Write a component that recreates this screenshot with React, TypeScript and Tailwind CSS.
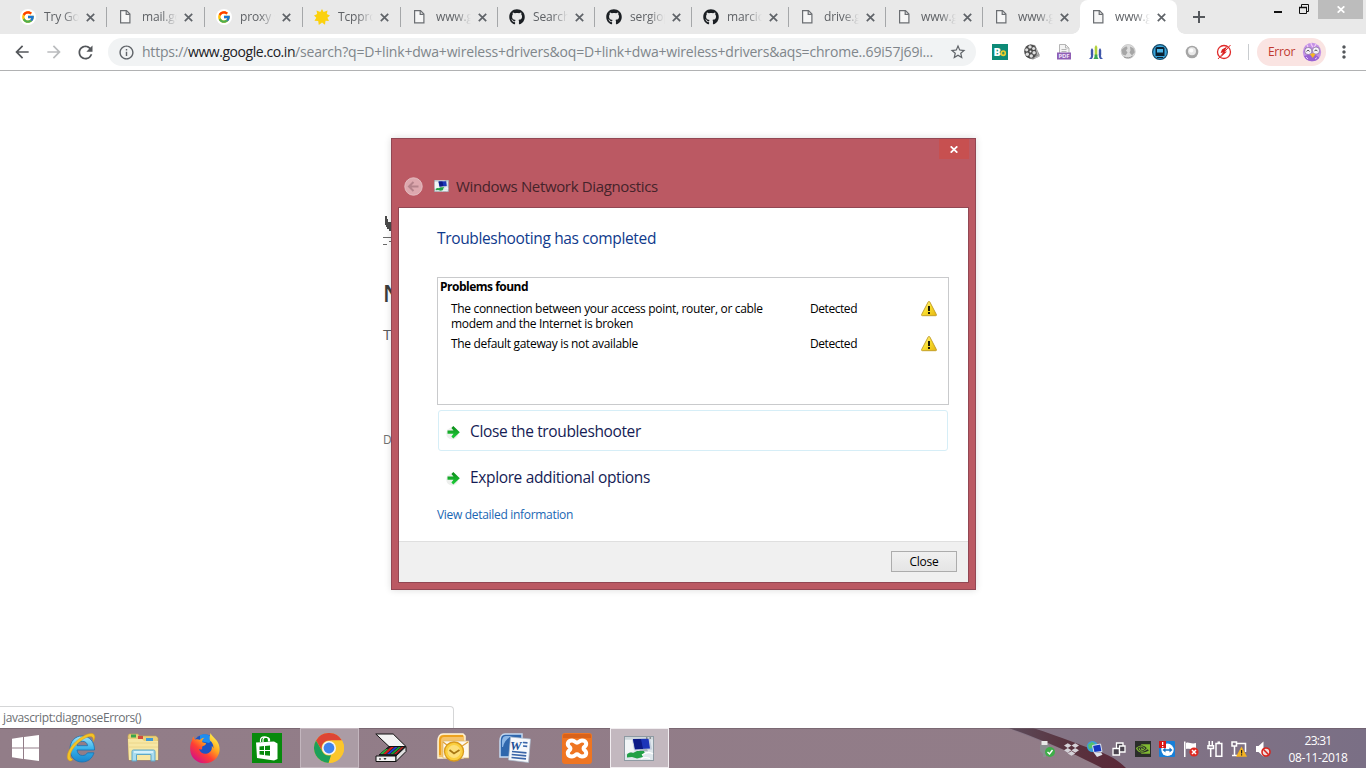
import type { ReactNode } from "react";
import { FcGoogle } from "react-icons/fc";
import { FaDropbox, FaGithub } from "react-icons/fa6";
import { MdArrowBack, MdArrowForward, MdRefresh, MdInfoOutline, MdStarBorder, MdMoreVert } from "react-icons/md";
import { SiNvidia } from "react-icons/si";

/* ---------- tab strip ---------- */

type Fav = "google" | "page" | "sun" | "github";

const tabs: { title: string; fav: Fav; width: string }[] = [
  { title: "Try Goog", fav: "google", width: "w-[98px]" },
  { title: "mail.goo", fav: "page", width: "w-[98px]" },
  { title: "proxy s", fav: "google", width: "w-[98px]" },
  { title: "Tcpprox", fav: "sun", width: "w-[98px]" },
  { title: "www.go", fav: "page", width: "w-[97px]" },
  { title: "Search", fav: "github", width: "w-[97px]" },
  { title: "sergiop", fav: "github", width: "w-[97px]" },
  { title: "marcica", fav: "github", width: "w-[97px]" },
  { title: "drive.go", fav: "page", width: "w-[97px]" },
  { title: "www.go", fav: "page", width: "w-[97px]" },
  { title: "www.go", fav: "page", width: "w-[97px]" },
  { title: "www.go", fav: "page", width: "w-[97px]" },
];

function Favicon({ kind }: { kind: Fav }) {
  if (kind === "google")
    return (
      <span className="flex h-4 w-4 items-center justify-center rounded-full bg-white">
        <FcGoogle size={14} />
      </span>
    );
  if (kind === "github") return <FaGithub size={16} color="#1b1f23" />;
  if (kind === "sun")
    return (
      <svg width="16" height="16" viewBox="0 0 16 16">
        <path
          d="M8 0l1.600 3L13.500 1.500l-.7 3.600 3.200 1.300-2.600 2.300 1.600 3.300-3.500-.2L11 15.800 8 13.500 4.800 16l-.6-4-3.700-.2 1.800-3L0 6.500l3.200-1.400-.7-3.700L6.300 3z"
          fill="#fbd10e"
        />
      </svg>
    );
  return (
    <svg width="16" height="16" viewBox="0 0 16 16" fill="none" stroke="#6b6e72" strokeWidth="1.200">
      <path d="M2.600 1.600h5.900l3.400 3.400v8.900H2.600z" fill="#f6f6f6" />
      <path d="M8.200 1.800v3.600h3.600" />
    </svg>
  );
}

function CrossIcon() {
  return (
    <svg width="9" height="9" viewBox="0 0 9 9" stroke="#5f6368" strokeWidth="1.700">
      <path d="M.8.8l7.400 7.400M8.200.8L.8 8.200" />
    </svg>
  );
}

function TabStrip() {
  return (
    <div className="flex h-[34px] shrink-0 bg-[#e9e9e9] pl-[9px]">
      {tabs.map((t, i) => {
        const active = i === tabs.length - 1;
        const separated = i < tabs.length - 2;
        return (
          <div
            key={i}
            className={`${t.width} relative flex h-full shrink-0 items-center pl-[11px] ${active ? "rounded-t-lg bg-white" : ""}`}
          >
            <Favicon kind={t.fav} />
            <span className="ml-2 w-[35px] overflow-hidden text-[12px] leading-4 tracking-[-0.15px] whitespace-nowrap text-[#5f6266] [mask-image:linear-gradient(to_right,black_55%,transparent_100%)]">
              {t.title}
            </span>
            <span className="ml-[7px]">
              <CrossIcon />
            </span>
            {separated && <i className="ml-auto h-5 w-px bg-[#a5a7a9]" />}
            {active && (
              <>
                <i className="absolute bottom-0 -left-2 h-2 w-2 bg-[radial-gradient(circle_at_0_0,#e9e9e9_7.5px,#fff_8px)]" />
                <i className="absolute -right-2 bottom-0 h-2 w-2 bg-[radial-gradient(circle_at_100%_0,#e9e9e9_7.5px,#fff_8px)]" />
              </>
            )}
          </div>
        );
      })}
      <div className="flex w-11 items-center justify-center">
        <svg width="12" height="12" viewBox="0 0 12 12" stroke="#55585c" strokeWidth="2">
          <path d="M6 0v12M0 6h12" />
        </svg>
      </div>
      <div className="ml-auto flex h-5 items-start">
        <svg className="mt-[11px]" width="8" height="2">
          <rect width="8" height="2" fill="#111" />
        </svg>
        <svg className="mt-1 ml-[17px]" width="10" height="10" viewBox="0 0 10 10" fill="none" stroke="#111">
          <path d="M.5 3.500h7v6h-7zM2.500 3V.5h7v7H8" />
          <path d="M0 3.500h8" strokeWidth="1.500" />
        </svg>
        <div className="mr-[3px] ml-[9px] flex h-[19px] w-[45px] items-center justify-center bg-[#bcbcbc]">
          <svg width="8" height="7" viewBox="0 0 8 7" stroke="#fff" strokeWidth="1.700">
            <path d="M.7.3l6.600 6.400M7.300.3L.7 6.700" />
          </svg>
        </div>
      </div>
    </div>
  );
}

/* ---------- toolbar ---------- */

const extensionIcons: ReactNode[] = [
  <svg key="bo" width="16" height="16">
    <rect width="16" height="16" fill="#0d8a76" />
    <text x="1.500" y="12" fontSize="11" fontWeight="800" fill="#fff" fontFamily="Open Sans, sans-serif">
      B
    </text>
    <ellipse cx="11.300" cy="9.200" rx="2" ry="2.200" fill="#3c9a55" stroke="#f0cf2c" strokeWidth="1.600" />
  </svg>,
  <svg key="reel" width="16" height="16" viewBox="0 0 16 16">
    <path d="M6 .5l5 .5 4.500 9.500v2L9 15.500l-4-1z" fill="#8b8b8b" />
    <ellipse cx="6.500" cy="7.500" rx="6.300" ry="7" fill="#4c4c4c" />
    <g fill="#dedede">
      <circle cx="6" cy="2.900" r="1.700" />
      <circle cx="2.700" cy="5.800" r="1.600" />
      <circle cx="3.300" cy="10.300" r="1.700" />
      <circle cx="7.300" cy="12" r="1.700" />
      <circle cx="10.100" cy="8.700" r="1.700" />
      <circle cx="9.600" cy="4.600" r="1.500" />
    </g>
    <circle cx="6.500" cy="7.500" r="1" fill="#eee" />
    <path d="M12 4.500l2.200 7M10.500 14l4.500-2" stroke="#ccc" strokeWidth=".8" />
  </svg>,
  <svg key="pdf" width="16" height="16" viewBox="0 0 16 16">
    <path d="M3.500.5h6l3.500 3.500v6H3.500z" fill="#f4f4f4" stroke="#b5b5b5" />
    <path d="M9.500.5v3.500H13M5.500 5.500h5M5.500 7.500h5" stroke="#b5b5b5" fill="none" />
    <rect x="1" y="8.500" width="14" height="7" fill="#8f5fb4" />
    <text x="2.500" y="14.300" fontSize="6" fontWeight="700" fill="#f1e6fa" fontFamily="Open Sans, sans-serif" textLength="11">
      PDF
    </text>
  </svg>,
  <svg key="bars" width="16" height="16" viewBox="0 0 16 16">
    <path d="M6.700 12V3L8 1l1.300 2v9z" fill="#b2d23c" />
    <path d="M2.800 11V6l1.200-2 1.200 2v5zM10.800 11V6L12 4l1.200 2v5z" fill="#3f55a8" />
    <path d="M.8 15c1.700-.8 2.200-2 2.200-4.500h2.200c0 2.300-.3 3.600-1.400 4.500zM15.200 15c-1.700-.8-2.200-2-2.200-4.500h-2.200c0 2.300.3 3.600 1.400 4.500z" fill="#4059ad" />
    <path d="M5.300 15c1-1 1.400-2.300 1.400-4.500h2.600c0 2.200.4 3.500 1.400 4.500z" fill="#3aa655" />
  </svg>,
  <svg key="globe" width="16" height="16" viewBox="0 0 16 16">
    <circle cx="8.200" cy="7.500" r="7" fill="#dcdcdc" stroke="#bdbdbd" strokeWidth=".7" />
    <path d="M1.500 6c1.500-1.500 3-3.500 5.500-3.500l.5 2L6 6.500l1.500 2-2 3-3-1zM10 2.500l3.500 1.800 1.300 4-2.800 3.200-2.500-3 1-2z" fill="#a6a6a6" />
    <path d="M4 13c3 1.300 6.500 1 8.500-1" stroke="#999" fill="none" />
  </svg>,
  <svg key="train" width="16" height="16" viewBox="0 0 16 16">
    <circle cx="8" cy="8" r="7.400" fill="#3aa7de" stroke="#174c6b" strokeWidth="1.200" />
    <path d="M3.500 4.500c0-1 1-1.500 2-1.500h5c1 0 2 .5 2 1.500V12h-9z" fill="#0b2233" />
    <rect x="5" y="5" width="6" height="3.500" fill="#4fb7e8" />
    <path d="M5 10.500h1.500M9.500 10.500H11M5 13.500h6" stroke="#0b2233" />
  </svg>,
  <svg key="ring" width="16" height="16" viewBox="0 0 16 16">
    <circle cx="8" cy="8" r="6.300" fill="#a5a5a5" />
    <circle cx="8" cy="7.300" r="4" fill="#e9e9e9" />
    <circle cx="7.300" cy="6.500" r="2" fill="#fff" />
  </svg>,
  <svg key="flash" width="16" height="16" viewBox="0 0 16 16">
    <circle cx="8" cy="8" r="6.500" fill="none" stroke="#e02b2b" strokeWidth="1.300" />
    <path d="M11 2.500L6 5.500 4.600 9l2.600-.5L4.500 13.500l6.500-6-2.500.2z" fill="#d81f1f" />
    <path d="M2 15L14.500 1" stroke="#e02b2b" />
  </svg>,
];

function Avatar() {
  return (
    <svg width="20" height="20" viewBox="0 0 20 20">
      <circle cx="10" cy="10" r="9.200" fill="#c391e6" />
      <path d="M2 14c1 3 4 5.300 8 5.200 3 0 5.500-1 7.500-3.500l-4-3-8 .3z" fill="#9a63d3" />
      <path d="M5 3c1 1 1 2 .5 3M9 1c0 2 1 3 2 4M14 2l-2 4" stroke="#f4c9f6" strokeWidth="1.300" fill="none" />
      <circle cx="6.300" cy="9" r="3.600" fill="#f6f1fb" stroke="#55406d" strokeWidth=".5" />
      <circle cx="14" cy="8.600" r="3.600" fill="#f6f1fb" stroke="#55406d" strokeWidth=".5" />
      <path d="M4.600 9.500c.6-1.500 2.400-1.500 3 0M12.400 9.200c.6-1.500 2.400-1.500 3 0" stroke="#333" fill="none" strokeWidth=".9" />
      <path d="M8 12.200l3-1.200 2.300 1.500-2.600 3.500z" fill="#f5b820" />
      <path d="M4 15l2 2M13 17l2-1.500" stroke="#e5c8fa" />
    </svg>
  );
}

function Toolbar() {
  return (
    <div className="flex h-[37px] shrink-0 items-center border-b border-[#b1b2b3] bg-white">
      <div className="flex w-[108px] items-center pl-3">
        <MdArrowBack size={20} color="#54575b" />
        <MdArrowForward size={20} color="#babcbe" className="ml-3" />
        <MdRefresh size={21} color="#54575b" className="ml-[11px]" />
      </div>
      <div className="flex h-7 w-[868px] items-center rounded-full bg-[#f1f3f4] pr-[9px] pl-[10px]">
        <MdInfoOutline size={17} color="#5f6368" />
        <p className="ml-[7px] text-[14px] leading-5 whitespace-nowrap text-[#80868b]">
          <span className="tracking-[-0.22px]">https://</span>
          <span className="tracking-[-0.45px] text-[#202124]">www.google.co.in</span>
          <span className="tracking-[-0.184px]">
            /search?q=D+link+dwa+wireless+drivers&amp;oq=D+link+dwa+wireless+drivers&amp;aqs=chrome..69i57j69i...
          </span>
        </p>
        <MdStarBorder size={18} color="#5f6368" className="ml-auto" />
      </div>
      <div className="ml-4 flex gap-4">{extensionIcons}</div>
      <i className="ml-4 h-4 w-px bg-[#c9cccf]" />
      <div className="ml-2 flex h-7 w-[69px] items-center rounded-full bg-[#fae4e2] pl-[11px]">
        <span className="w-[34px] text-[12px] leading-4 tracking-[-0.3px] text-[#c0392f]">Error</span>
        <Avatar />
      </div>
      <MdMoreVert size={20} color="#54575b" className="ml-2" />
    </div>
  );
}

/* ---------- page behind the dialog ---------- */

function ErrorPage() {
  return (
    <main className="flex flex-1 flex-col overflow-hidden bg-white">
      <div className="ml-[383px] flex w-[9px] flex-col pt-[145px] text-[#3c3c3c]">
        <svg width="9" height="32" viewBox="0 0 9 32" shapeRendering="crispEdges">
          <path d="M2 0h2v3h1v3h4v9H6v-2H4v-2H3v-2H2z" fill="#4b4b4b" />
          <path d="M0 21h9v1H0zM6 25h3v1H6zM0 28h4v1H0z" fill="#6a6a6a" />
        </svg>
        <span className="mt-[29px] text-[23px] leading-[32px] font-semibold">N</span>
        <span className="mt-[15px] text-[15px] leading-5 text-[#5b5b5b]">T</span>
        <span className="mt-[86px] text-[12px] leading-5 text-[#707070]">D</span>
      </div>
      <div className="mt-auto flex h-[22px] w-[454px] items-center rounded-tr border-t border-r border-[#d5d6d7] bg-white pt-px pl-[3px] text-[12px] tracking-[-0.38px] text-[#6c6f73]">
        javascript:diagnoseErrors()
      </div>
    </main>
  );
}

/* ---------- diagnostics dialog ---------- */

function DiagnosticsIcon({ width, height }: { width: number; height: number }) {
  return (
    <svg width={width} height={height} viewBox="0 0 30 25">
      <rect x=".5" y=".5" width="29" height="24" fill="#dfe7ec" stroke="#8e9aa3" />
      <rect x="1" y="1" width="28" height="2.500" fill="#cfd7db" />
      <path d="M1 4h8l2 11-10 3z" fill="#f2f5f7" />
      <path d="M8 3l18-.5 2 11-18 1z" fill="#c3cddc" />
      <path d="M9 3l15.500-.2 1.500 9.700-15 .8z" fill="#1c35b8" />
      <path d="M9 3l8-.1 2 10-8 .4z" fill="#0c1a86" />
      <path d="M22 2h1.500M25.500 2H27" stroke="#444" />
      <path d="M15 13.500l8-.4 1 2.200h-8z" fill="#a7b2bc" />
      <path d="M3 18.500c2-2 4-2.500 6-1.500l4-2h7l1 2.500-3 1.500 1 2-6 1.500-5-1.500-5 .5z" fill="#22a046" />
      <path d="M18 19c4-3 8-3 11-1M17 23c3-2 6-1.500 9-.5" stroke="#fff" fill="none" strokeWidth="1.300" />
    </svg>
  );
}

function WarningIcon() {
  return (
    <svg width="16" height="16" viewBox="0 0 16 16">
      <defs>
        <linearGradient id="warn" x1="0" x2="1" y1="0" y2="1">
          <stop offset="0" stopColor="#fff59a" />
          <stop offset=".5" stopColor="#f8dc2c" />
          <stop offset="1" stopColor="#e5b512" />
        </linearGradient>
      </defs>
      <path d="M7.200.9c.4-.7 1.200-.7 1.600 0l6.600 12.700c.3.600 0 1.100-.7 1.100H1.300c-.7 0-1-.5-.7-1.100z" fill="url(#warn)" stroke="#c09a22" strokeWidth=".9" />
      <path d="M7 5h2v5H7zM7 11h2v2H7z" fill="#1c1a05" />
    </svg>
  );
}

function GreenArrow() {
  return (
    <svg width="16" height="16" viewBox="0 0 16 16">
      <defs>
        <linearGradient id="arrow" x1="0" x2="0" y1="0" y2="1">
          <stop offset="0" stopColor="#0b8a18" />
          <stop offset="1" stopColor="#1fd03a" />
        </linearGradient>
      </defs>
      <circle cx="6.200" cy="9.500" r="6" fill="#e6e8e6" opacity=".7" />
      <path d="M1.500 6.600H7.500L5.400 4 7.300 2 13.800 8.200 7.300 14.400 5.400 12.400 7.500 9.800H1.500z" fill="url(#arrow)" />
    </svg>
  );
}

const problems = [
  "The connection between your access point, router, or cable modem and the Internet is broken",
  "The default gateway is not available",
];

function Dialog() {
  return (
    <section className="absolute top-[138px] left-[391px] flex h-[452px] w-[585px] flex-col border border-[#924753] bg-[#bb5963] px-[6px] pb-[6px] shadow-[0_0_7px_rgba(0,0,0,0.14)]">
      <div className="flex h-5 shrink-0 justify-end">
        <button className="flex h-5 w-[30px] items-center justify-center bg-[#c75050]">
          <svg width="8" height="7" viewBox="0 0 8 7" stroke="#fff" strokeWidth="1.700">
            <path d="M.7.3l6.600 6.400M7.300.3L.7 6.700" />
          </svg>
        </button>
      </div>
      <header className="flex h-12 shrink-0 items-center pt-[7px] pl-[6px]">
        <svg width="19" height="19" viewBox="0 0 19 19">
          <circle cx="9.500" cy="9.500" r="8.700" fill="#dda8ae" stroke="#e4bcc0" />
          <path d="M14.500 9.500H5.500M9.500 5l-4.500 4.500L9.500 14" stroke="#b5838b" strokeWidth="2" fill="none" />
        </svg>
        <span className="-mt-[2px] ml-[11px]">
          <DiagnosticsIcon width={15} height={12} />
        </span>
        <h2 className="-mt-[2px] ml-[7px] text-[15px] leading-5 tracking-[-0.35px] text-[#45232a]">
          Windows Network Diagnostics
        </h2>
      </header>
      <div className="flex flex-1 flex-col border border-[#924753] bg-white">
        <div className="flex flex-col items-start pt-[18px] pl-[38px]">
          <h1 className="text-[15.5px] leading-6 tracking-[-0.35px] text-[#0f3a8c]">Troubleshooting has completed</h1>
          <div className="mt-[27px] h-32 w-[512px] border border-[#c9cacc] text-[12px] text-black">
            <h3 className="pt-px pl-[2px] leading-4 font-bold tracking-[-0.5px]">Problems found</h3>
            <ul className="mt-[6px] flex flex-col gap-[5px] pl-[13px]">
              {problems.map((p) => (
                <li key={p} className="grid grid-cols-[359px_111px_16px] leading-[15px]">
                  <span className="w-[325px] tracking-[-0.325px]">{p}</span>
                  <span className="tracking-[-0.44px]">Detected</span>
                  <span className="h-[15px]">
                    <WarningIcon />
                  </span>
                </li>
              ))}
            </ul>
          </div>
          <button className="mt-[5px] ml-px flex h-[41px] w-[510px] items-center rounded-[3px] border border-[#d6eef7] pt-[2px] pl-[7px] text-[15.5px] tracking-[-0.37px] text-[#151c55]">
            <GreenArrow />
            <span className="ml-2">Close the troubleshooter</span>
          </button>
          <button className="mt-[6px] ml-px flex h-[41px] w-[510px] items-center pl-2 text-[15.5px] tracking-[-0.36px] text-[#151c55]">
            <GreenArrow />
            <span className="ml-2">Explore additional options</span>
          </button>
          <a className="mt-[9px] text-[12px] leading-4 tracking-[-0.31px] text-[#1a66b3]">View detailed information</a>
        </div>
        <footer className="mt-auto flex h-[41px] items-center justify-end border-t border-[#dfdfdf] bg-[#f0f0f0] pr-[11px] pb-px">
          <button className="flex h-[21px] w-[66px] items-center justify-center border border-[#acacac] bg-linear-to-b from-[#f0f0f0] to-[#e5e5e5] pt-px text-[12px] leading-4 tracking-[-0.25px] text-black">
            Close
          </button>
        </footer>
      </div>
    </section>
  );
}

/* ---------- taskbar ---------- */

const StartIcon = (
  <svg width="27" height="26" viewBox="0 0 27 26" fill="#fff">
    <path d="M0 3.700L11 2v10.500H0zM12 1.900L27 0v12.500H12zM0 13.500h11V24L0 22.300zM12 13.500h15V26l-15-2z" />
  </svg>
);

const IeIcon = (
  <svg width="30" height="32" viewBox="0 0 30 32">
    <defs>
      <linearGradient id="ie" x1="0" x2="0" y1="0" y2="1">
        <stop offset="0" stopColor="#9fe4fb" />
        <stop offset=".5" stopColor="#35b1ea" />
        <stop offset="1" stopColor="#1a86cd" />
      </linearGradient>
    </defs>
    <path
      d="M16 4c7.500 0 12.500 5.500 12.500 14H11c.3 3.500 2.500 5.500 5.500 5.500 2.200 0 3.900-.9 5-2.700h6.500C26.300 26.500 22 30 16 30 8.800 30 4 24.500 4 17S9 4 16 4zm-5 9.700h10.600C21.300 11 19.300 9.300 16.300 9.300S11.400 11 11 13.700z"
      fill="url(#ie)"
      stroke="#1874b4"
      strokeWidth=".8"
      fillRule="evenodd"
    />
    <path d="M5 29C-1 29 .5 20 7 12.500 14 4.500 25-1 28 2.500c1.500 2 .7 4.500-.7 7 .3-3-.3-5-2.800-5C20.500 4.500 13 9 8 15.500 3.500 21.500 3 26 7 27.500z" fill="#f4c326" stroke="#d79b12" strokeWidth=".5" />
  </svg>
);

const ExplorerIcon = (
  <svg width="32" height="30" viewBox="0 0 32 30">
    <path d="M1 3l1-2h9l1 2h17l2 2v22H2z" fill="#e9cf79" stroke="#c8a94f" strokeWidth=".6" />
    <path d="M4 1.500h5v3H4z" fill="#3aa54b" />
    <path d="M11 3h5v3h-5z" fill="#d24a3c" />
    <path d="M19 5h7v3h-7z" fill="#3f9ad6" />
    <path d="M1 6h14l2 2h14v19H2z" fill="#f7e7a4" />
    <path d="M1.500 10h29M2 14h29" stroke="#ecd68a" />
    <path d="M5 28V18.500c0-1 .6-1.500 1.500-1.500h20c1 0 1.500.5 1.500 1.500V28h-4v-6.500H9.500V28z" fill="#a9dcef" stroke="#5fa7c6" />
    <path d="M7 19h19" stroke="#e6f8ff" strokeWidth="1.500" />
  </svg>
);

const FirefoxIcon = (
  <svg width="32" height="32" viewBox="0 0 32 32">
    <defs>
      <linearGradient id="fx" x1=".85" x2=".2" y1=".1" y2=".9">
        <stop offset="0" stopColor="#fff04a" />
        <stop offset=".35" stopColor="#ffa51f" />
        <stop offset=".65" stopColor="#ff3f33" />
        <stop offset="1" stopColor="#d8147f" />
      </linearGradient>
    </defs>
    <circle cx="16" cy="15" r="12.500" fill="#1c54c4" />
    <path d="M11 3c5-2 11 0 13 4l-4 4-9-2z" fill="#1f8df0" />
    <path
      d="M21.500 1c1 3 4 4.500 6.500 8 4 6 3 12.500-.5 17C21 33.500 9 33 3.500 25 .3 20 .6 13 3 8.500c.2-1.700.6-3 1.700-4 0 1.500.5 2.400 1.300 3 1.700-.5 3.300-.4 5 .3 1.300-1.300 2.700-2 4.300-2-2 1.700-2.300 3-2 4.500l3.800.9c-.2 1.700-1.600 2.300-3.800 3.300-.5 1 .4 2.700-.8 3-1.500 0-2.500-.5-2.500-.5 1 3.500 4 5.200 7.300 4.700 4-.6 6.200-4 5.400-7.700 1 .7 1.500 1.600 1.700 2.500.3-3-.8-6-3.400-8-1-3 .5-6 .5-7.500z"
      fill="url(#fx)"
    />
  </svg>
);

const StoreIcon = (
  <svg width="30" height="30" viewBox="0 0 30 30">
    <rect width="30" height="30" fill="#078a0c" />
    <path d="M4 9.500l18-1 3.500 2V26L22 27.500 5 25z" fill="#fff" />
    <path d="M8.500 9V7c0-4 8-4.500 8 0v1.500M11 9V6.500c.5-3 6-3 6.500 0v2" fill="none" stroke="#fff" strokeWidth="1.200" />
    <path d="M7.500 13.500l4.500-.4v4H7.500zM13 13l5-.5v4.600h-5zM7.500 18H12v4l-4.500-.5zM13 18h5v4.800l-5-.6z" fill="#078a0c" />
  </svg>
);

const ChromeIcon = (
  <svg width="30" height="30" viewBox="0 0 30 30">
    <circle cx="15" cy="15" r="15" fill="#fbc62c" />
    <path d="M2 7.500A15 15 0 0 1 28 7.500H15a7.500 7.500 0 0 0-6.500 11.200z" fill="#dd4535" />
    <path d="M2 7.500l6.500 11.200A7.500 7.500 0 0 0 17 22.200L14.500 30A15 15 0 0 1 2 7.500z" fill="#1ca05a" />
    <path d="M14.800 30l6.700-11.300A7.500 7.500 0 0 0 15 7.500h13A15 15 0 0 1 14.800 30z" fill="#fbc62c" />
    <circle cx="15" cy="15" r="7" fill="#f4f4f4" />
    <circle cx="15" cy="15" r="5.400" fill="#4083ee" />
  </svg>
);

const ScannerIcon = (
  <svg width="32" height="30" viewBox="0 0 32 30" stroke="#111" strokeLinejoin="round">
    <path d="M.8 1h17.400L31 13.500H14z" fill="#f3f3f3" />
    <path d="M4 22l10-8.500h17L21 22.500z" fill="#262626" />
    <path d="M8 21l8-7h3l-8 7z" fill="#d81d1d" stroke="none" />
    <path d="M12 21l8-7h2.500l-8 7z" fill="#1c3fe0" stroke="none" />
    <path d="M15.500 21l8-7H26l-8 7z" fill="#16a531" stroke="none" />
    <path d="M5 21l6-5h2l-5 5z" fill="#26b53d" stroke="none" />
    <path d="M19 21l8-7h1.500L21 21z" fill="#d81d1d" stroke="none" />
    <path d="M1 23h20v5.500H1z" fill="#f3f3f3" />
    <path d="M21 23l10-9.500v5L21 28.500z" fill="#e0e0e0" />
    <path d="M4 26h2M9 25l1 1.500L11 25" fill="none" />
  </svg>
);

const OutlookIcon = (
  <svg width="32" height="30" viewBox="0 0 32 30">
    <path d="M6 1h20l2 2v20l-2 2H1V8c0-4 2-7 5-7z" fill="#f5c36a" stroke="#fff3d5" strokeWidth="1.500" />
    <path d="M3 22V8c0-3 1-5 4-5h19" fill="none" stroke="#eda21e" strokeWidth="2" />
    <path d="M6 8h26v17H6z" fill="#fdf8ec" stroke="#d9b46a" strokeWidth=".7" />
    <path d="M6 9l12 9L31 9" fill="none" stroke="#e0a23a" strokeWidth="1.300" />
    <circle cx="17" cy="18.500" r="9.500" fill="#fbcf3e" stroke="#d99a1c" strokeWidth="1.300" />
    <circle cx="17" cy="18.500" r="6.500" fill="#fde07a" />
    <path d="M12.500 17l4.500 3.500 5.500-3.500" fill="none" stroke="#a77712" strokeWidth="1.700" />
  </svg>
);

const WordIcon = (
  <svg width="32" height="30" viewBox="0 0 32 30">
    <path d="M6 1h17v23H1V8c0-4 2-7 5-7z" fill="#2f67ad" stroke="#c5daf2" strokeWidth="1.500" />
    <path d="M4 14c1-5 4-9 9-11H7C4 3 3 6 3 9v5z" fill="#8cb7e6" />
    <path d="M11.500 4l20 2-2 23.500L9.500 27z" fill="#f7f9fc" stroke="#a9b9cc" strokeWidth=".7" />
    <path d="M24 9.500l4.500.4M24 13l4.200.4M13 18.500l14.500 1.400M12.700 21.500l14.500 1.400M12.500 24.500L27 25.900" stroke="#3b66a8" strokeWidth="1.700" />
    <text x="11" y="16.500" fontSize="13" fontWeight="700" fontStyle="italic" fill="#1e4f96" fontFamily="Liberation Serif, serif">
      W
    </text>
  </svg>
);

const XamppIcon = (
  <svg width="30" height="31" viewBox="0 0 30 31">
    <rect width="30" height="31" rx="3" fill="#ef7522" />
    <path d="M1 3c0-2 1-2 2-2h24c1 0 2 0 2 2v2H1z" fill="#d9621a" />
    <path
      d="M10 7.500c-4.500 0-5.500 4.200-2.300 6.500 1 .7 1 2.300 0 3-3.200 2.300-2.200 6.500 2.300 6.500 3 0 3-2.200 5-2.200s2 2.200 5 2.200c4.500 0 5.500-4.200 2.300-6.500-1-.7-1-2.300 0-3 3.200-2.300 2.200-6.500-2.300-6.500-3 0-3 2.200-5 2.200s-2-2.200-5-2.200z"
      fill="none"
      stroke="#fff"
      strokeWidth="4"
    />
    <path d="M11.500 12l7 7M18.500 12l-7 7" stroke="#ef7522" strokeWidth="2.500" strokeLinecap="round" />
  </svg>
);

const taskbarApps: { name: string; icon: ReactNode; frame: string }[] = [
  { name: "ie", icon: IeIcon, frame: "border-transparent" },
  { name: "explorer", icon: ExplorerIcon, frame: "border-transparent" },
  { name: "firefox", icon: FirefoxIcon, frame: "border-transparent" },
  { name: "store", icon: StoreIcon, frame: "border-transparent" },
  { name: "chrome", icon: ChromeIcon, frame: "border-[#c3b6be] bg-[#ab9ca5]" },
  { name: "scanner", icon: ScannerIcon, frame: "border-transparent" },
  { name: "outlook", icon: OutlookIcon, frame: "border-transparent" },
  { name: "word", icon: WordIcon, frame: "border-transparent" },
  { name: "xampp", icon: XamppIcon, frame: "border-transparent" },
  { name: "diagnostics", icon: <DiagnosticsIcon width={30} height={25} />, frame: "border-[#f1edf0] bg-[#c3b8bf]" },
];

const trayIcons: ReactNode[] = [
  <svg key="usb" width="16" height="16" viewBox="0 0 16 16">
    <path d="M2.500 0h6v4h-6z" fill="#e8e8e8" />
    <path d="M1 4h9v6l-3 3v3H4v-3L1 10z" fill="#8b8d90" />
    <circle cx="11" cy="11" r="5" fill="#3fae49" />
    <path d="M8.500 11l2 2 3-4" fill="none" stroke="#fff" strokeWidth="1.400" />
  </svg>,
  <FaDropbox key="dropbox" size={15} color="#d5d2d8" />,
  <svg key="net" width="16" height="16" viewBox="0 0 16 16">
    <circle cx="5.500" cy="5.500" r="5.500" fill="#3b9fd8" />
    <path d="M1 4l4-3 3 2-3 4-3 1z" fill="#57c06a" />
    <path d="M5.500 4.500l8-1.500 1.500 7.500-8 1z" fill="#1636c0" stroke="#dfe6f2" />
    <path d="M7 12l7-.8 1.500 2.500L10 16z" fill="#dfe3e8" />
  </svg>,
  <svg key="windows" width="16" height="16" viewBox="0 0 16 16" stroke="#fff" fill="#4a434e" strokeWidth="1.300">
    <path d="M5.500 2h6.500v6.500H5.500z" />
    <path d="M2 7.500h6.500V14H2z" />
    <path d="M8.500 5h5.500v6H8.500z" />
  </svg>,
  <span key="nvidia" className="flex h-4 w-4 items-center justify-center bg-[#2a2d2a]">
    <SiNvidia size={14} color="#80b932" />
  </span>,
  <svg key="teamviewer" width="16" height="16" viewBox="0 0 16 16">
    <rect x="0" y="0" width="16" height="16" rx="1" fill="#167fd8" />
    <circle cx="8.500" cy="8.800" r="6.200" fill="#fff" />
    <path d="M3.500 9l3-2.500v1.700h4V6.500l3 2.500-3 2.500V9.800h-4v1.700z" fill="#1673c4" />
    <rect width="7" height="7" fill="#d81616" />
    <path d="M3 1h1.300v3H3zM3 5h1.300v1.200H3z" fill="#fff" />
  </svg>,
  <svg key="flag" width="16" height="16" viewBox="0 0 16 16">
    <path d="M1 .5h1.500V16H1z" fill="#fff" />
    <path d="M3 2c3-1.500 5 1.500 10 0v6c-4 1.500-7-1-10 0z" fill="#fff" />
    <circle cx="11" cy="11" r="4.600" fill="#dd2a22" />
    <path d="M9 9l4 4M13 9l-4 4" stroke="#fff" strokeWidth="1.500" />
  </svg>,
  <svg key="battery" width="16" height="16" viewBox="0 0 16 16" fill="none" stroke="#fff" strokeWidth="1.500">
    <path d="M2.200 0v4M5.300 0v4M1 4.700h5.500v2.800H1zM3.700 8v8" />
    <path d="M9 2.500h5.800v12.700H9z" />
    <path d="M10.500 1.200H13" />
  </svg>,
  <svg key="lan" width="16" height="16" viewBox="0 0 16 16">
    <path d="M1 1h4.500v4H1zM3.500 5v10M6 2.500h8.500V11M1 14.500h5" fill="none" stroke="#fff" strokeWidth="1.500" />
    <path d="M10.500 5.500l5.500 10.300H5z" fill="#f4b321" />
    <path d="M10 9h1.200v3.500H10zM10 13.300h1.200v1.200H10z" fill="#222" />
  </svg>,
  <svg key="sound" width="16" height="16" viewBox="0 0 16 16">
    <path d="M1 5h2.500L8.500.5v15L3.500 11H1z" fill="#fff" />
    <circle cx="11" cy="11" r="4" fill="#efdede" stroke="#d8231c" strokeWidth="1.600" />
    <path d="M8.300 8.300l5.400 5.400" stroke="#d8231c" strokeWidth="1.600" />
  </svg>,
];

function Taskbar() {
  return (
    <div className="relative flex h-10 shrink-0 bg-linear-to-r from-[#927d88] to-[#917c88]">
      <svg className="absolute top-0 right-0" width="366" height="40" viewBox="0 0 366 40">
        <defs>
          <linearGradient id="sky" x1="0" x2="1">
            <stop offset="0" stopColor="#867585" />
            <stop offset="1" stopColor="#7a6f85" />
          </linearGradient>
          <linearGradient id="streak" x1="0" x2="1">
            <stop offset="0" stopColor="#5c4b5a" />
            <stop offset=".5" stopColor="#59333f" />
            <stop offset="1" stopColor="#5b2838" />
          </linearGradient>
        </defs>
        <path d="M8 0h358v40H110z" fill="url(#sky)" />
        <path d="M9 0h24c28 9 50 18 70 25 10 4 17 9 23 15h-24C75 26 45 13 9 0z" fill="url(#streak)" />
      </svg>
      <i className="absolute top-0 left-0 h-px w-full bg-[#6c5c66]/60" />
      <div className="relative flex w-[50px] items-center justify-center">{StartIcon}</div>
      {taskbarApps.map((a) => (
        <div key={a.name} className="relative flex w-[62px] justify-center">
          <div className={`flex h-10 w-[59px] items-center justify-center border ${a.frame}`}>{a.icon}</div>
        </div>
      ))}
      <div className="relative ml-auto flex items-center">
        <div className="flex w-[240px] items-center pt-[2px]">
          {trayIcons.map((icon, i) => (
            <span key={i} className="flex w-6 justify-center">
              {icon}
            </span>
          ))}
        </div>
        <div className="mr-[18px] ml-[13px] flex w-[60px] flex-col items-center pt-[2px] text-[12px] leading-[17px] text-white">
          <span className="tracking-[-0.72px]">23:31</span>
          <span className="tracking-[-0.36px]">08-11-2018</span>
        </div>
      </div>
    </div>
  );
}

export default function App() {
  return (
    <div className="relative flex h-[768px] w-[1366px] flex-col overflow-hidden bg-white font-['Open_Sans','Noto_Sans',sans-serif]">
      <TabStrip />
      <Toolbar />
      <ErrorPage />
      <Taskbar />
      <Dialog />
    </div>
  );
}
